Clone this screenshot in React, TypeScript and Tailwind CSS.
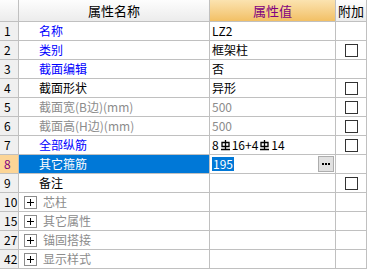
import React from "react";

type Row = {
  no: string;
  name: string;
  value?: string;
  tone: "blue" | "black" | "gray";
  check?: boolean;
  group?: boolean;
  active?: boolean;
};

const rows: Row[] = [
  { no: "1", name: "名称", value: "LZ2", tone: "blue" },
  { no: "2", name: "类别", value: "框架柱", tone: "blue", check: true },
  { no: "3", name: "截面编辑", value: "否", tone: "blue" },
  { no: "4", name: "截面形状", value: "异形", tone: "black", check: true },
  { no: "5", name: "截面宽(B边)(mm)", value: "500", tone: "gray", check: true },
  { no: "6", name: "截面高(H边)(mm)", value: "500", tone: "gray", check: true },
  { no: "7", name: "全部纵筋", value: "8#16+4#14", tone: "blue", check: true },
  { no: "8", name: "其它箍筋", value: "195", tone: "black", active: true },
  { no: "9", name: "备注", value: "", tone: "black", check: true },
  { no: "10", name: "芯柱", tone: "gray", group: true },
  { no: "15", name: "其它属性", tone: "gray", group: true },
  { no: "27", name: "锚固搭接", tone: "gray", group: true },
  { no: "42", name: "显示样式", tone: "gray", group: true },
];

const toneClass = {
  blue: "text-[#0000ff]",
  black: "text-black",
  gray: "text-[#8c8c8c]",
};

const font = { fontFamily: '"Noto Sans CJK SC", "Liberation Sans", sans-serif' };

function Check() {
  return <div className="w-[13px] h-[13px] border border-[#333333] bg-white" />;
}

// HRB400 rebar grade symbol
function RebarMark() {
  return (
    <svg width="11" height="12" viewBox="0 0 11 12" className="mx-[1px]">
      <path d="M2 3.5h7v4H2z M5.5 1v10 M1 10.5h9" stroke="black" strokeWidth="1.3" fill="none" />
    </svg>
  );
}

function ValueText({ v, tone }: { v: string; tone: Row["tone"] }) {
  if (v.includes("#")) {
    const parts = v.split("#");
    return (
      <span className="text-black flex items-center">
        {parts.map((p, i) => (
          <React.Fragment key={i}>
            {i > 0 && <RebarMark />}
            <span>{p}</span>
          </React.Fragment>
        ))}
      </span>
    );
  }
  return <span className={tone === "gray" ? "text-[#8c8c8c]" : "text-black"}>{v}</span>;
}

function PlusBox() {
  return (
    <svg width="13" height="13" viewBox="0 0 13 13" className="mr-[6px] shrink-0">
      <rect x="0.5" y="0.5" width="12" height="12" fill="white" stroke="#8c8c8c" />
      <path d="M3 6.5h7 M6.5 3v7" stroke="black" strokeWidth="1" />
    </svg>
  );
}

export default function App() {
  return (
    <div className="w-[371px] h-[274px] bg-white text-[12px] leading-none overflow-hidden" style={font}>
      <div className="grid grid-cols-[19px_191px_126px_31px] w-[367px]">
        {/* header */}
        <div className="h-[22px] border-r border-b border-[#c0c0c0] bg-gradient-to-b from-[#fdfdfd] to-[#ececec]" />
        <div className="h-[22px] border-r border-b border-[#c0c0c0] bg-gradient-to-b from-[#fdfdfd] to-[#ececec] flex items-center justify-center text-[13px] text-black">
          属性名称
        </div>
        <div className="h-[22px] border-r border-b border-[#c0c0c0] bg-gradient-to-b from-[#fbe3b0] to-[#f2c064] flex items-center justify-center text-[13px] text-[#800080]">
          属性值
        </div>
        <div className="h-[22px] border-r border-b border-[#c0c0c0] bg-gradient-to-b from-[#fdfdfd] to-[#ececec] flex items-center justify-center text-[13px] text-black">
          附加
        </div>

        {rows.map((r) => (
          <React.Fragment key={r.no}>
            <div
              className={`h-[19px] border-r border-b border-[#c0c0c0] flex items-center pl-[4px] text-[12px] ${
                r.active ? "bg-[#fcd596] text-[#800080]" : "bg-[#f0f0f0] text-black"
              }`}
            >
              {r.no}
            </div>
            <div
              className={`h-[19px] border-r border-b border-[#c0c0c0] flex items-center ${
                r.active ? "bg-[#0078d7] text-white" : toneClass[r.tone]
              } ${r.group ? "pl-[5px]" : "pl-[20px]"}`}
            >
              {r.group && <PlusBox />}
              <span>{r.name}</span>
            </div>
            <div className="h-[19px] border-r border-b border-[#c0c0c0] flex items-center pl-[2px] pr-[1px]">
              {r.active ? (
                <div className="flex items-center w-full h-full">
                  <span className="bg-[#0078d7] text-white px-[1px] leading-[14px]">{r.value}</span>
                  <div className="ml-auto w-[16px] h-[16px] bg-[#e1e1e1] border border-[#adadad] flex items-center justify-center gap-[1px]">
                    <span className="w-[2px] h-[2px] bg-black" />
                    <span className="w-[2px] h-[2px] bg-black" />
                    <span className="w-[2px] h-[2px] bg-black" />
                  </div>
                </div>
              ) : r.value ? (
                <ValueText v={r.value} tone={r.tone} />
              ) : null}
            </div>
            <div className="h-[19px] border-r border-b border-[#c0c0c0] flex items-center justify-center">
              {r.check && <Check />}
            </div>
          </React.Fragment>
        ))}
      </div>
    </div>
  );
}
